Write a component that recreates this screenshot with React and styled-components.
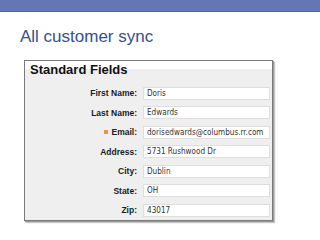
import React from "react";
import styled, { createGlobalStyle } from "styled-components";

const GlobalStyle = createGlobalStyle`
  html, body {
    margin: 0;
    padding: 0;
    background: #ffffff;
  }
  body {
    width: 320px;
    height: 240px;
    overflow: hidden;
    font-family: "Liberation Sans", Arial, sans-serif;
  }
`;

const fields = [
  { label: "First Name:", value: "Doris" },
  { label: "Last Name:", value: "Edwards" },
  { label: "Email:", value: "dorisedwards@columbus.rr.com", required: true },
  { label: "Address:", value: "5731 Rushwood Dr" },
  { label: "City:", value: "Dublin" },
  { label: "State:", value: "OH" },
  { label: "Zip:", value: "43017" },
];

const App = () => {
  return (
    <Slide>
      <GlobalStyle />
      <TopBar />
      <Title>All customer sync</Title>
      <Panel>
        <PanelHeader>Standard Fields</PanelHeader>
        <Rows>
          {fields.map(({ label, value, required }) => (
            <Row key={label}>
              <Label>
                {required && <Bullet />}
                {label}
              </Label>
              <Value>{value}</Value>
            </Row>
          ))}
        </Rows>
      </Panel>
    </Slide>
  );
};

export default App;

const Slide = styled.div`
  width: 320px;
  height: 240px;
  display: flex;
  flex-direction: column;
`;

const TopBar = styled.div`
  height: 11px;
  background: #6476b6;
  border-bottom: 1px solid #4f62a3;
`;

const Title = styled.h1`
  margin: 15px 0 0 20px;
  font-size: 17px;
  line-height: 20px;
  font-weight: normal;
  color: #35508f;
`;

const Panel = styled.div`
  margin: 13px 0 0 24px;
  width: 247px;
  border: 1px solid #7a7a7a;
  box-shadow: 1px 1px 0 #9a9a9a, 2px 2px 1px #c4c4c4;
  background: linear-gradient(#ffffff 0 8px, #efefef 8px);
`;

const PanelHeader = styled.div`
  padding: 1px 5px 0;
  font-size: 13px;
  line-height: 15.5px;
  font-weight: bold;
  color: #111;
`;

const Rows = styled.div`
  display: flex;
  flex-direction: column;
  padding-top: 6px;
`;

const Row = styled.div`
  height: 19.5px;
  display: grid;
  grid-template-columns: 112px 127px;
  column-gap: 6px;
  align-items: center;
`;

const Label = styled.div`
  display: flex;
  align-items: center;
  justify-content: flex-end;
  gap: 3px;
  font-size: 8.5px;
  font-weight: bold;
  color: #1a1a1a;
`;

const Bullet = styled.span`
  width: 4px;
  height: 4px;
  background: #f0953f;
`;

const Value = styled.div`
  height: 11px;
  padding-left: 3px;
  background: #ffffff;
  border: 1px solid #dedede;
  font-family: "DejaVu Sans Condensed", "DejaVu Sans", sans-serif;
  font-size: 8.1px;
  line-height: 11px;
  color: #333;
  white-space: nowrap;
  overflow: hidden;
`;
